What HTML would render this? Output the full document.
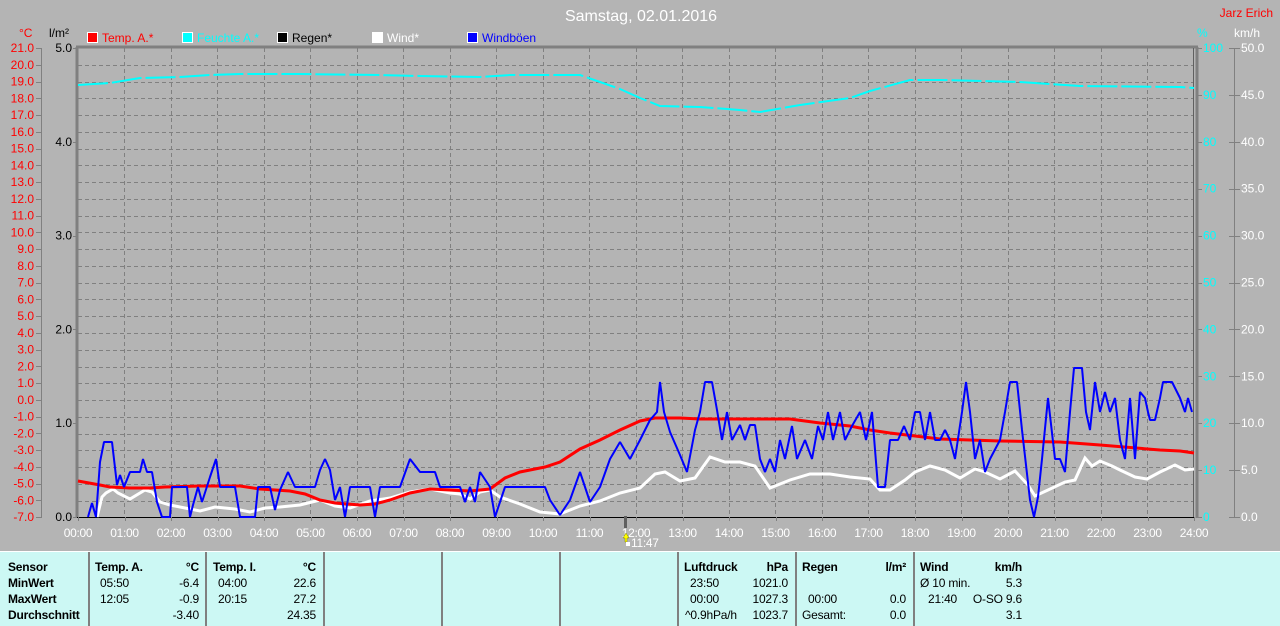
<!DOCTYPE html>
<html><head><meta charset="utf-8"><style>
html,body{margin:0;padding:0;width:1280px;height:625px;overflow:hidden;background:#b4b4b4;font-family:"Liberation Sans",sans-serif}
svg{position:absolute;left:0;top:0}
#tbl{position:absolute;left:0;top:551px;width:1280px;height:74px;background:#ccf8f4;border-top:1px solid #fff}
.c{position:absolute;top:0;height:74px;border-left:2px solid #808080}
.t{position:absolute;font-size:12px;color:#000;white-space:nowrap;letter-spacing:-0.2px}
.b{font-weight:bold}
</style></head><body>
<svg width="1280" height="551" xmlns="http://www.w3.org/2000/svg" font-family="Liberation Sans, sans-serif" font-size="12">
<text x="641" y="21" fill="#fff" font-size="16" text-anchor="middle">Samstag, 02.01.2016</text>
<text x="1273" y="17" fill="#f00" text-anchor="end">Jarz Erich</text>
<text x="19" y="37" fill="#f00">°C</text>
<text x="49" y="37" fill="#000">l/m²</text>
<text x="1197" y="37" fill="#0ff">%</text>
<text x="1234" y="37" fill="#fff">km/h</text>
<g stroke="#fff" stroke-width="1">
<rect x="87.5" y="32.5" width="10" height="10" fill="#f00"/>
<rect x="182.5" y="32.5" width="10" height="10" fill="#0ff"/>
<rect x="277.5" y="32.5" width="10" height="10" fill="#000"/>
<rect x="372.5" y="32.5" width="10" height="10" fill="#fff"/>
<rect x="467.5" y="32.5" width="10" height="10" fill="#00f"/>
</g>
<text x="102" y="42" fill="#f00">Temp. A.*</text>
<text x="197" y="42" fill="#0ff">Feuchte A.*</text>
<text x="292" y="42" fill="#000">Regen*</text>
<text x="387" y="42" fill="#fff">Wind*</text>
<text x="482" y="42" fill="#00f">Windböen</text>
<g id="grid" stroke="#808080" stroke-dasharray="4,3" stroke-width="1">
<path d="M78 65.5H1193M78 82.5H1193M78 98.5H1193M78 115.5H1193M78 132.5H1193M78 149.5H1193M78 165.5H1193M78 182.5H1193M78 199.5H1193M78 216.5H1193M78 232.5H1193M78 249.5H1193M78 266.5H1193M78 283.5H1193M78 299.5H1193M78 316.5H1193M78 333.5H1193M78 350.5H1193M78 367.5H1193M78 383.5H1193M78 400.5H1193M78 417.5H1193M78 434.5H1193M78 450.5H1193M78 467.5H1193M78 484.5H1193M78 501.5H1193"/>
<path d="M124.5 48V517M171.5 48V517M217.5 48V517M264.5 48V517M310.5 48V517M357.5 48V517M403.5 48V517M450.5 48V517M496.5 48V517M543.5 48V517M589.5 48V517M636.5 48V517M682.5 48V517M729.5 48V517M775.5 48V517M822.5 48V517M868.5 48V517M915.5 48V517M961.5 48V517M1008.5 48V517M1054.5 48V517M1101.5 48V517M1147.5 48V517"/>
</g>
<g stroke="#808080" fill="none">
<path d="M76 47H1198" stroke-width="3"/>
<path d="M77 47V518" stroke-width="3"/>
<path d="M1197 47V518" stroke-width="3"/>
<path d="M1193.5 48V518" stroke="#606060"/>
<path d="M41.5 48V517M1234.5 48V517"/>
</g>
<path d="M77 517.5H1194" stroke="#000"/>
<g id="lt" fill="#f00" text-anchor="end"></g>
<g id="rt" fill="#000" text-anchor="end"></g>
<g id="pt" fill="#0ff"></g>
<g id="kt" fill="#fff"></g>
<g id="ht" fill="#fff" text-anchor="middle" letter-spacing="-0.3"></g>
<g id="ticks" stroke="#808080"></g>
<path d="M625.5 516V528" stroke="#606060" stroke-width="3"/>
<path d="M623 538l3-5 3 5-2 0 0 4-2 0 0-4z" fill="#ff0" stroke="#808000" stroke-width=".5"/>
<rect x="626" y="542" width="4" height="4" fill="#fff"/>
<text x="631" y="547" fill="#fff" letter-spacing="-0.3">11:47</text>
<polyline fill="none" stroke="#0ff" stroke-width="2" stroke-dasharray="30,4" points="78,85 110,83 140,78 180,77 210,75 240,74 300,74 380,75 420,76 480,77 510,75 580,75 600,82 620,89 640,98 660,106 700,107 740,110 760,112 800,105 850,98 870,91 910,80 940,80 1020,82 1080,86 1180,87 1194,88"/>
<polyline fill="none" stroke="#fff" stroke-width="3" points="97,517 102,497 106,493 113,489 118,493 130,499 145,490 152,492 160,502 170,505 185,508 200,511 215,507 235,509 250,512 265,508 280,507 300,505 320,500 335,506 350,508 370,501 390,498 410,492 430,489 450,493 460,494 470,499 480,492 490,490 500,497 520,504 540,512 560,514 580,506 600,501 620,493 640,488 655,474 665,472 680,481 695,478 710,457 725,462 740,462 755,466 770,488 790,480 810,474 830,474 850,477 870,479 880,490 890,490 905,480 915,472 930,466 945,470 960,478 975,469 985,472 1000,479 1015,471 1028,485 1035,496 1048,490 1065,482 1075,480 1085,458 1092,466 1100,461 1112,466 1120,470 1135,477 1147,479 1160,472 1175,465 1185,470 1194,469"/>
<polyline fill="none" stroke="#f00" stroke-width="3" points="78,481 100,485 110,487 130,488 150,488 165,487 200,486 240,486 260,489 290,491 305,494 320,500 335,503 360,505 375,504 390,500 410,493 430,489 450,490 470,491 490,489 505,478 520,472 545,467 560,462 580,449 600,440 620,430 640,421 655,418 680,418 700,419 730,419 760,419 790,419 820,423 850,426 870,430 890,433 940,439 1000,441 1060,442 1100,445 1160,450 1180,451 1194,453"/>
<polyline fill="none" stroke="#00f" stroke-width="2" stroke-linejoin="bevel" points="88,517 92,503 96,517 100,462 104,442 112,442 117,485 120,475 124,487 130,472 140,472 143,459 147,472 152,472 157,502 162,517 170,517 172,487 187,487 190,517 193,505 198,487 202,502 210,477 216,459 220,487 235,487 240,517 255,517 258,487 270,487 275,510 280,490 288,472 295,487 315,487 320,470 325,459 330,470 335,500 340,487 345,517 350,487 370,487 375,517 380,487 400,487 410,459 420,472 435,472 440,487 460,487 465,502 470,487 475,502 480,472 490,487 495,517 505,487 545,487 550,500 560,515 570,500 580,472 590,502 600,487 610,459 620,442 630,459 640,440 650,420 657,412 660,382 664,412 670,432 680,455 687,472 695,430 700,412 705,382 712,382 717,410 722,440 727,412 732,440 740,425 745,440 750,425 755,425 760,459 765,472 770,459 775,472 780,440 785,459 792,426 797,459 805,440 812,459 818,426 823,440 828,412 833,440 840,412 845,440 852,426 860,412 866,440 872,412 878,487 885,487 890,440 898,440 904,426 910,440 915,412 920,412 925,440 930,412 935,440 940,440 945,430 950,440 955,459 962,412 966,382 970,412 975,459 980,440 985,472 990,459 1000,440 1005,412 1010,382 1017,382 1022,430 1030,500 1034,517 1038,497 1042,459 1048,398 1055,459 1060,459 1065,472 1070,412 1074,368 1082,368 1086,412 1090,430 1095,382 1100,412 1105,392 1110,412 1115,398 1120,440 1125,459 1130,398 1135,459 1140,392 1145,398 1148,412 1150,420 1155,420 1160,398 1163,382 1167,382 1172,382 1180,398 1185,412 1188,398 1192,412"/>
</svg>
<div id="tbl">
<div class="c" style="left:88px"></div><div class="c" style="left:205px"></div><div class="c" style="left:323px"></div><div class="c" style="left:441px"></div><div class="c" style="left:559px"></div><div class="c" style="left:677px"></div><div class="c" style="left:795px"></div><div class="c" style="left:913px"></div>
<div class="t b" style="left:8px;top:8px">Sensor</div>
<div class="t b" style="left:8px;top:24px">MinWert</div>
<div class="t b" style="left:8px;top:40px">MaxWert</div>
<div class="t b" style="left:8px;top:56px">Durchschnitt</div>
<div class="t b" style="left:95px;top:8px">Temp. A.</div><div class="t b" style="right:1081px;top:8px">°C</div>
<div class="t" style="left:100px;top:24px">05:50</div><div class="t" style="right:1081px;top:24px">-6.4</div>
<div class="t" style="left:100px;top:40px">12:05</div><div class="t" style="right:1081px;top:40px">-0.9</div>
<div class="t" style="right:1081px;top:56px">-3.40</div>
<div class="t b" style="left:213px;top:8px">Temp. I.</div><div class="t b" style="right:964px;top:8px">°C</div>
<div class="t" style="left:218px;top:24px">04:00</div><div class="t" style="right:964px;top:24px">22.6</div>
<div class="t" style="left:218px;top:40px">20:15</div><div class="t" style="right:964px;top:40px">27.2</div>
<div class="t" style="right:964px;top:56px">24.35</div>
<div class="t b" style="left:684px;top:8px">Luftdruck</div><div class="t b" style="right:492px;top:8px">hPa</div>
<div class="t" style="left:690px;top:24px">23:50</div><div class="t" style="right:492px;top:24px">1021.0</div>
<div class="t" style="left:690px;top:40px">00:00</div><div class="t" style="right:492px;top:40px">1027.3</div>
<div class="t" style="left:685px;top:56px">^0.9hPa/h</div><div class="t" style="right:492px;top:56px">1023.7</div>
<div class="t b" style="left:802px;top:8px">Regen</div><div class="t b" style="right:374px;top:8px">l/m²</div>
<div class="t" style="left:808px;top:40px">00:00</div><div class="t" style="right:374px;top:40px">0.0</div>
<div class="t" style="left:802px;top:56px">Gesamt:</div><div class="t" style="right:374px;top:56px">0.0</div>
<div class="t b" style="left:920px;top:8px">Wind</div><div class="t b" style="right:258px;top:8px">km/h</div>
<div class="t" style="left:920px;top:24px">Ø 10 min.</div><div class="t" style="right:258px;top:24px">5.3</div>
<div class="t" style="left:928px;top:40px">21:40</div><div class="t" style="right:258px;top:40px">O-SO 9.6</div>
<div class="t" style="right:258px;top:56px">3.1</div>
</div>
<script>
var NS="http://www.w3.org/2000/svg";
function T(g,x,y,s){var e=document.createElementNS(NS,"text");e.setAttribute("x",x);e.setAttribute("y",y);e.textContent=s;document.getElementById(g).appendChild(e);}
function L(d){var e=document.createElementNS(NS,"path");e.setAttribute("d",d);document.getElementById("ticks").appendChild(e);}
for(var i=0;i<=28;i++){var y=48+i*16.75;T("lt",34,y+4,(21-i).toFixed(1));L("M36 "+(Math.round(y)+.5)+"H42");}
for(var i=0;i<=5;i++){var y=48+i*93.8;T("rt",72,y+4,(5-i).toFixed(1));L("M73 "+(Math.round(y)+.5)+"H77");}
for(var i=0;i<=10;i++){var y=48+i*46.9;T("pt",1203,y+4,String(100-i*10));L("M1198 "+(Math.round(y)+.5)+"H1202");L("M1229 "+(Math.round(y)+.5)+"H1240");T("kt",1241,y+4,(50-i*5).toFixed(1));}
for(var h=0;h<=24;h++){var x=78+h*46.5;T("ht",x,537,(h<10?"0":"")+h+":00");L("M"+(Math.round(x)+.5)+" 517V521");}
</script>
</body></html>
